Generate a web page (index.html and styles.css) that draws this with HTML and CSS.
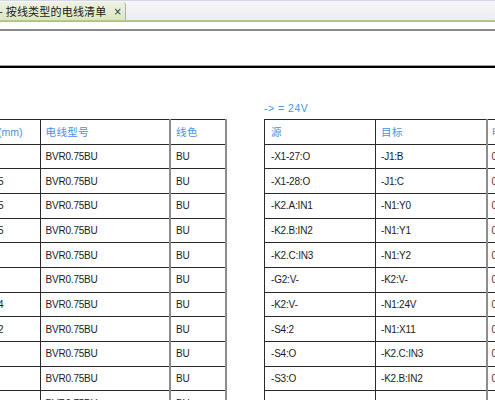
FILE: index.html
```html
<!DOCTYPE html>
<html lang="zh">
<head>
<meta charset="utf-8">
<title>按线类型的电线清单</title>
<link rel="stylesheet" href="styles.css">
</head>
<body>
<div class="tabbar">
  <div class="tab"><span class="tab-title">- 按线类型的电线清单</span><span class="tab-close">×</span></div>
</div>
<div class="rule-gray"></div>
<div class="rule-black"></div>
<div class="tables">
  <table class="tbl tbl-left">
    <colgroup><col class="c-a"><col class="c-b"><col class="c-c"></colgroup>
    <thead>
      <tr><th class="cut">(mm)</th><th class="cn">电线型号</th><th class="cn last">线色</th></tr>
    </thead>
    <tbody>
      <tr><td class="cut"></td><td>BVR0.75BU</td><td class="last">BU</td></tr>
      <tr><td class="cut">5</td><td>BVR0.75BU</td><td class="last">BU</td></tr>
      <tr><td class="cut">5</td><td>BVR0.75BU</td><td class="last">BU</td></tr>
      <tr><td class="cut">5</td><td>BVR0.75BU</td><td class="last">BU</td></tr>
      <tr><td class="cut"></td><td>BVR0.75BU</td><td class="last">BU</td></tr>
      <tr><td class="cut"></td><td>BVR0.75BU</td><td class="last">BU</td></tr>
      <tr><td class="cut">4</td><td>BVR0.75BU</td><td class="last">BU</td></tr>
      <tr><td class="cut">2</td><td>BVR0.75BU</td><td class="last">BU</td></tr>
      <tr><td class="cut"></td><td>BVR0.75BU</td><td class="last">BU</td></tr>
      <tr><td class="cut"></td><td>BVR0.75BU</td><td class="last">BU</td></tr>
      <tr><td class="cut"></td><td>BVR0.75BU</td><td class="last">BU</td></tr>
    </tbody>
  </table>
  <div class="right-block">
    <div class="note">-&gt; = 24V</div>
    <table class="tbl tbl-right">
      <colgroup><col class="c-d"><col class="c-e"><col class="c-f"></colgroup>
      <thead>
        <tr><th class="cn first">源</th><th class="cn">目标</th><th class="cn">电</th></tr>
      </thead>
      <tbody>
        <tr><td class="first">-X1-27:O</td><td>-J1:B</td><td class="num">0.75</td></tr>
        <tr><td class="first">-X1-28:O</td><td>-J1:C</td><td class="num">0.75</td></tr>
        <tr><td class="first">-K2.A:IN1</td><td>-N1:Y0</td><td class="num">0.75</td></tr>
        <tr><td class="first">-K2.B:IN2</td><td>-N1:Y1</td><td class="num">0.75</td></tr>
        <tr><td class="first">-K2.C:IN3</td><td>-N1:Y2</td><td class="num">0.75</td></tr>
        <tr><td class="first">-G2:V-</td><td>-K2:V-</td><td class="num">0.75</td></tr>
        <tr><td class="first">-K2:V-</td><td>-N1:24V</td><td class="num">0.75</td></tr>
        <tr><td class="first">-S4:2</td><td>-N1:X11</td><td class="num">0.75</td></tr>
        <tr><td class="first">-S4:O</td><td>-K2.C:IN3</td><td class="num">0.75</td></tr>
        <tr><td class="first">-S3:O</td><td>-K2.B:IN2</td><td class="num">0.75</td></tr>
        <tr><td class="first"></td><td></td><td class="num"></td></tr>
      </tbody>
    </table>
  </div>
</div>
</body>
</html>
```

FILE: styles.css
```css
html, body {
  margin: 0;
  padding: 0;
  overflow: hidden;
  background: #ffffff;
}
body {
  width: 495px;
  height: 400px;
  font-family: "Liberation Sans", "Noto Sans CJK SC", sans-serif;
  color: #1c1c1c;
}
.tabbar {
  height: 19px;
  background: linear-gradient(#f6f6fa, #ececf3);
  border-top: 1px solid #d3d9e4;
  border-bottom: 1px solid #b8c98e;
  box-shadow: 0 1px 0 #a9b6c6;
  display: flex;
  align-items: flex-end;
}
.tab {
  width: 126px;
  height: 18px;
  box-sizing: border-box;
  background: linear-gradient(#eef3e2, #dbe7c2);
  border-right: 1px solid #a9b29f;
  border-top-right-radius: 3px;
  display: flex;
  align-items: center;
  font-family: "Noto Sans CJK SC", sans-serif;
  font-size: 11px;
  letter-spacing: 0.2px;
  color: #202020;
  white-space: nowrap;
  overflow: hidden;
}
.tab-title {
  margin-left: -1px;
}
.tab-close {
  margin-left: 7px;
  font-family: "DejaVu Sans", sans-serif;
  font-size: 10px;
  color: #333;
}
.rule-gray {
  margin-top: 8px;
  height: 2px;
  background: #8a8a8a;
}
.rule-black {
  margin-top: 34px;
  height: 2px;
  border-top: 1px solid #9a9a9a;
  background: #000;
}
.tables {
  display: flex;
  align-items: flex-start;
  margin-top: 33px;
}
.tbl {
  flex: none;
  border-collapse: collapse;
  table-layout: fixed;
  font-size: 10px;
  letter-spacing: -0.2px;
}
.tbl th, .tbl td {
  height: 23.67px;
  padding: 0 0 0 5px;
  border: 1px solid #2a2a2a;
  text-align: left;
  vertical-align: middle;
  white-space: nowrap;
  overflow: hidden;
  font-weight: normal;
}
.tbl th.cn {
  font-family: "Noto Sans CJK SC", sans-serif;
  font-size: 10.5px;
  letter-spacing: 0.4px;
  color: #4a90ec;
}
.tbl-left {
  width: 226px;
  margin-top: 18px;
}
.tbl-left .c-a { width: 40px; }
.tbl-left .c-b { width: 130px; }
.tbl-left .c-c { width: 56px; }
.tbl-left .cut {
  border-left: none;
  padding-left: 0;
  text-indent: -2px;
}
.tbl-left th.cut {
  color: #4a90ec;
  font-size: 10.5px;
  letter-spacing: 0;
}
.tbl-left .last {
  border-left: 2px solid #8c8c8c;
  border-right: 2px solid #8c8c8c;
}
.right-block {
  flex: none;
  margin-left: 37px;
}
.note {
  height: 14px;
  margin-bottom: 4px;
  font-size: 10.5px;
  letter-spacing: 0.5px;
  line-height: 14px;
  color: #4a90ec;
  white-space: pre;
}
.tbl-right {
  width: 282px;
}
.tbl-right .c-d { width: 111px; }
.tbl-right .c-e { width: 111px; }
.tbl-right .c-f { width: 60px; }
.tbl-right .first {
  padding-left: 6px;
}
.tbl-right th:nth-child(3), .tbl-right td:nth-child(3) {
  border-left: 2px solid #8c8c8c;
  padding-left: 4px;
}
.tbl-right .num {
  color: #7a2a1e;
}
```
